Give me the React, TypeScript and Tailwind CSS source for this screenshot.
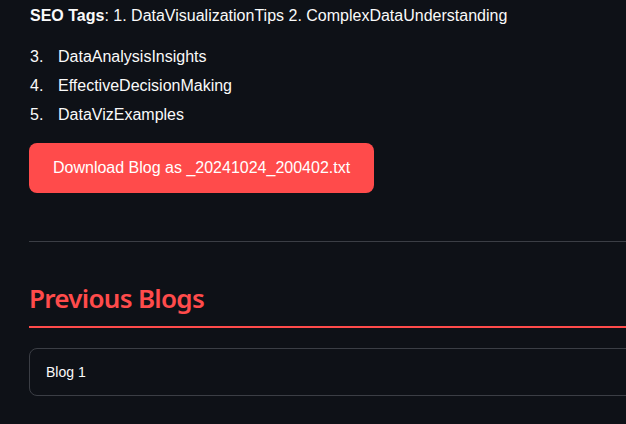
export default function App() {
  const tags = ['DataAnalysisInsights', 'EffectiveDecisionMaking', 'DataVizExamples'];

  return (
    <div className="w-[626px] h-[424px] overflow-hidden bg-[#0e1117] text-[#fafafa] font-['Liberation_Sans',Arial,sans-serif]">
      <div className="w-[720px] pl-[29px] pt-[4px]">
        <p className="text-[16px] leading-[24px] pl-[1px]">
          <span className="font-bold">SEO Tags</span>: 1. DataVisualizationTips 2. ComplexDataUnderstanding
        </p>

        <ol className="mt-[17px] pl-[1px] flex flex-col gap-[5px]">
          {tags.map((t, i) => (
            <li key={t} className="flex text-[16px] leading-[24px]">
              <span className="w-[28px]">{i + 3}.</span>
              <span>{t}</span>
            </li>
          ))}
        </ol>

        <button className="mt-[16px] h-[50px] w-[345px] rounded-[8px] bg-[#ff4b4b] text-white text-[16px] pl-[24px] text-left">
          Download Blog as _20241024_200402.txt
        </button>

        <hr className="mt-[48px] border-0 h-[1px] bg-[#3b3e45]" />

        <h2 className="mt-[38px] text-[#ff4b4b] text-[26px] leading-[36px] font-semibold font-['Noto_Sans',sans-serif] tracking-[-0.7px]">
          Previous Blogs
        </h2>
        <div className="mt-[10px] h-[2px] bg-[#ff4b4b]" />

        <div className="mt-[20px] h-[48px] rounded-[8px] border border-[#3b3e45] flex items-center pl-[16px] text-[14px]">
          Blog 1
        </div>
      </div>
    </div>
  );
}
